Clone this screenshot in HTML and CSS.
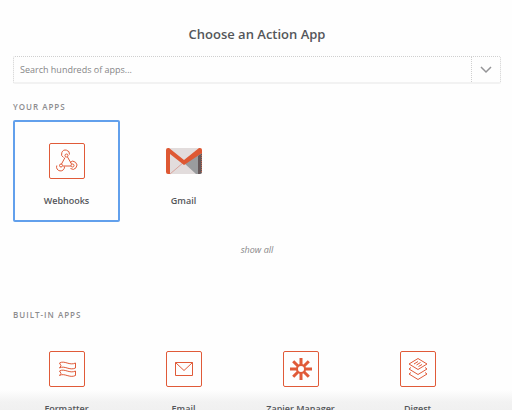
FILE: index.html
```html
<!DOCTYPE html>
<html lang="en">
<head>
<meta charset="utf-8">
<title>Choose an Action App</title>
<link rel="stylesheet" href="styles.css">
</head>
<body>
<main class="chooser">
  <h1 class="title">Choose an Action App</h1>
  <form class="search">
    <input class="search-input" type="text" aria-label="Search apps" placeholder="Search hundreds of apps...">
    <button class="search-toggle" type="button" aria-label="Open app list">
      <svg width="12" height="8" viewBox="0 0 12 8"><path d="M1 1l5 5 5-5"/></svg>
    </button>
  </form>

  <section class="your-apps">
    <h2 class="section-title">YOUR APPS</h2>
    <div class="apps">
      <button class="app selected" type="button">
        <svg class="icon" viewBox="0 0 36 36">
          <rect class="frame" x=".5" y=".5" width="35" height="35" rx="1.5"/>
          <path class="line" d="M14.500 14.500a4 4 0 1 1 6-3M7.800 22.500a4 4 0 1 0 7.700 1M21 19.500a4 4 0 1 1 .5 6M18.500 14l4 7M16 14.500l-3.500 6.500M14 23h8"/>
          <circle class="line" cx="17.500" cy="12.500" r="1.500"/>
          <circle class="line" cx="12" cy="22.500" r="1.500"/>
          <circle class="line" cx="23.500" cy="22.500" r="1.500"/>
        </svg>
        <span>Webhooks</span>
      </button>
      <button class="app" type="button">
        <svg class="icon" viewBox="0 0 36 36">
          <path fill="#e2dcdc" d="M2 5h32v26H2z"/>
          <path fill="#9a9c9e" d="M18 20L34 8v23H30z"/>
          <path fill="none" stroke="#d9a49c" d="M4 31l14-12"/>
          <path fill="#de5833" d="M0 7q0-2 2-2h1l15 12L33 5h1q2 0 2 2v3L18 22 4 11v20H2q-2 0-2-2z"/>
          <path fill="#66595a" d="M32 13l4-3v19q0 2-2 2h-2z"/>
          <path fill="none" stroke="#c66a52" stroke-dasharray="1 1" d="M35.500 10v19"/>
        </svg>
        <span>Gmail</span>
      </button>
    </div>
    <a class="show-all" href="#all">show all</a>
  </section>

  <section>
    <h2 class="section-title">BUILT-IN APPS</h2>
    <div class="apps">
      <button class="app" type="button">
        <svg class="icon" viewBox="0 0 36 36">
          <rect class="frame" x=".5" y=".5" width="35" height="35" rx="1.5"/>
          <path class="line" d="M10.500 12c5-3 10 3 16 0v5c-6 3-11-3-16 0q3-2 0-5zM10.500 20c5-3 10 3 16 0v4.500c-6 3-11-3-16 0q3-2 0-4.500z"/>
        </svg>
        <span>Formatter</span>
      </button>
      <button class="app" type="button">
        <svg class="icon" viewBox="0 0 36 36">
          <rect class="frame" x=".5" y=".5" width="35" height="35" rx="1.5"/>
          <path class="line" d="M9.500 11.500h17v13h-17zM9.500 11.500l8.500 8 8.500-8"/>
        </svg>
        <span>Email</span>
      </button>
      <button class="app" type="button">
        <svg class="icon" viewBox="0 0 36 36">
          <rect class="frame" x=".5" y=".5" width="35" height="35" rx="1.5"/>
          <path class="spokes" d="M18 7v7M18 22v7M7 18h7M22 18h7M10.200 10.200l5 5M20.800 20.800l5 5M25.800 10.200l-5 5M15.200 20.800l-5 5"/>
          <circle class="hub" cx="18" cy="18" r="4"/>
        </svg>
        <span>Zapier Manager</span>
      </button>
      <button class="app" type="button">
        <svg class="icon" viewBox="0 0 36 36">
          <rect class="frame" x=".5" y=".5" width="35" height="35" rx="1.5"/>
          <path class="line" d="M18 7.500l9 5.500-9 5.500-9-5.500zM11 16.500L9 18l9 5.500 9-5.500-2-1.500M11 21.500L9 23l9 5.500 9-5.500-2-1.500M14 13l4-2.500M16.500 14l4-2.500M18.500 15.500l3.500-2"/>
        </svg>
        <span>Digest</span>
      </button>
    </div>
  </section>
</main>
</body>
</html>
```
FILE: styles.css
```css
* {
  box-sizing: border-box;
}

body {
  margin: 0;
  background: #fefefe;
  color: #54565a;
  font-family: "Open Sans", "Noto Sans", sans-serif;
}

.chooser {
  position: relative;
  height: 100vh;
  overflow: hidden;
  padding: 24px 11px 0 13px;
}

/* Fade that hints at more apps below the fold */
.chooser::before {
  content: "";
  position: absolute;
  right: 0;
  bottom: 0;
  left: 0;
  height: 20px;
  background: linear-gradient(#fefefe, #f2f2f2 60%, #f0f0f0);
}

.title {
  margin: 0 0 12px;
  font-size: 13px;
  font-weight: 600;
  line-height: 20px;
  text-align: center;
}

.search {
  display: flex;
  height: 28px;
  border: 1px dotted #cfcfcf;
  border-bottom: 2px solid #f2f2f2;
  border-radius: 2px;
  margin-bottom: 17px;
}

.search-input {
  flex: 1;
  min-width: 0;
  padding: 0 6px;
  border: 0;
  background: none;
  color: #54565a;
  font: 9px "Open Sans", "Noto Sans", sans-serif;
}

.search-input::placeholder {
  color: #868688;
  opacity: 1;
}

.search-toggle {
  display: flex;
  align-items: center;
  justify-content: center;
  width: 29px;
  padding: 0;
  border: 0;
  border-left: 1px dotted #cfcfcf;
  background: none;
}

.search-toggle path {
  fill: none;
  stroke: #949496;
  stroke-width: 1.5;
}

.your-apps {
  margin-bottom: 51px;
}

.section-title {
  margin: 0 0 7px;
  color: #8c8c8e;
  font-size: 8px;
  font-weight: 600;
  line-height: 12px;
  letter-spacing: 1px;
}

.apps {
  display: grid;
  grid-template-columns: repeat(auto-fill, 107px);
  gap: 10px;
}

.app {
  position: relative;
  display: flex;
  flex-direction: column;
  align-items: center;
  gap: 15px;
  height: 102px;
  padding: 21px 0 0;
  border: 2px solid transparent;
  border-radius: 2px;
  background: none;
  color: #54565a;
  font: 600 9px/14px "Open Sans", "Noto Sans", sans-serif;
  white-space: nowrap;
}

.selected {
  border-color: #62a0ec;
}

.icon {
  width: 36px;
  height: 36px;
}

.frame,
.line {
  fill: none;
  stroke: #e05a38;
}

.frame {
  fill: #fefefe;
}

.spokes {
  stroke: #e05a38;
  stroke-width: 3;
}

.hub {
  fill: none;
  stroke: #e05a38;
  stroke-width: 2;
}

.show-all {
  display: block;
  margin-top: 20px;
  color: #868688;
  font-size: 9px;
  font-style: italic;
  line-height: 16px;
  text-align: center;
  text-decoration: none;
}
```
